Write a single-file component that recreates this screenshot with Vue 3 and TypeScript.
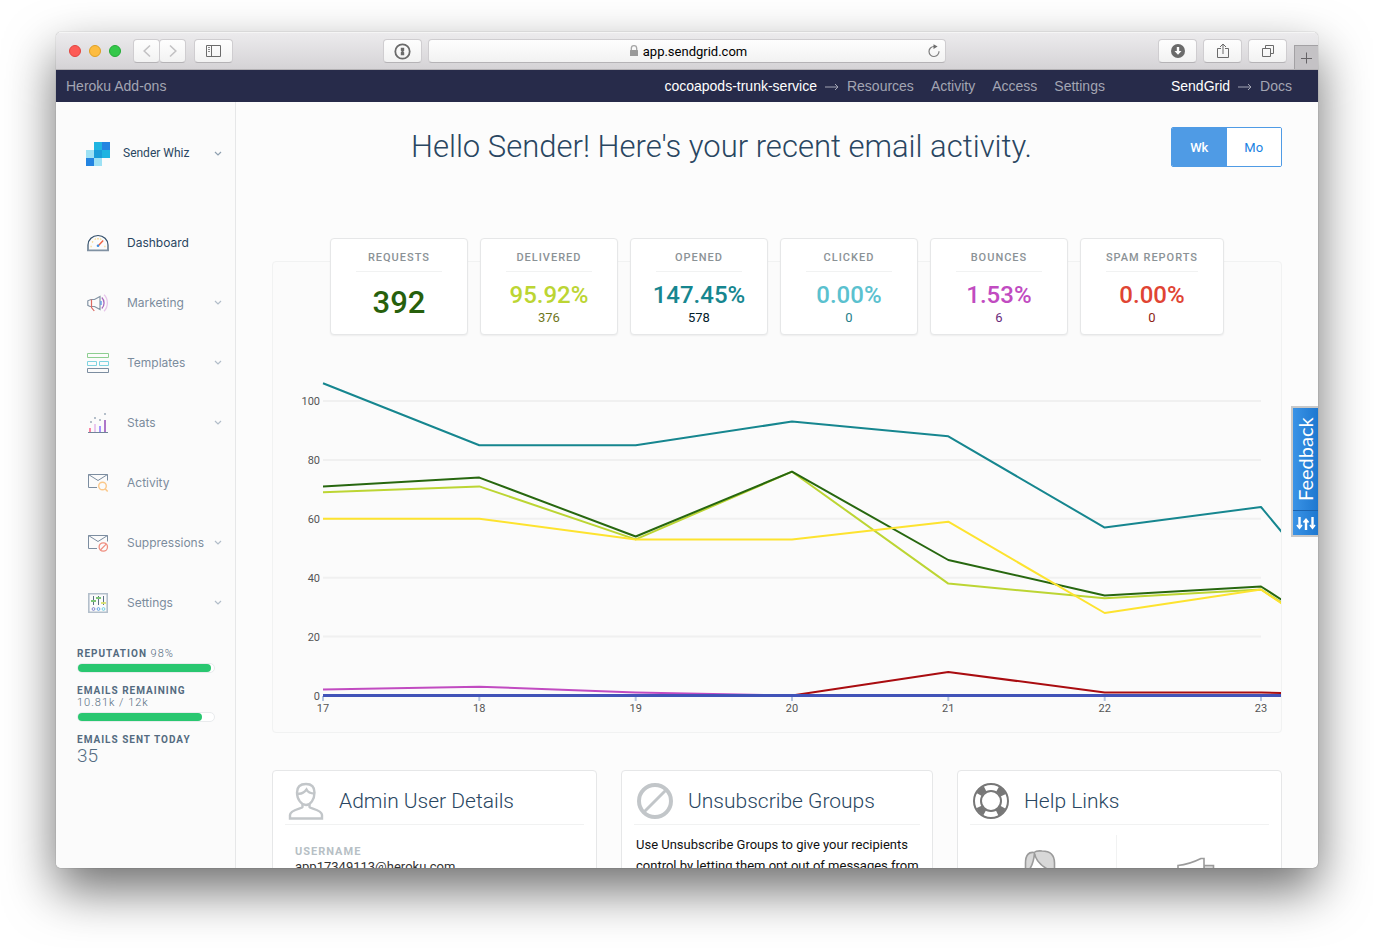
<script setup lang="ts">
import { computed, ref } from 'vue'

interface NavItem { label: string; icon: string; expandable: boolean }
interface Metric { label: string; value: string; count?: string; tone: string }
interface Series { name: string; color: string; width: number; values: number[] }

const range = ref<'Wk' | 'Mo'>('Wk')
const active = ref('Dashboard')
const address = ref('app.sendgrid.com')

const navItems: NavItem[] = [
  { label: 'Dashboard', icon: 'dashboard', expandable: false },
  { label: 'Marketing', icon: 'marketing', expandable: true },
  { label: 'Templates', icon: 'templates', expandable: true },
  { label: 'Stats', icon: 'stats', expandable: true },
  { label: 'Activity', icon: 'activity', expandable: false },
  { label: 'Suppressions', icon: 'suppressions', expandable: true },
  { label: 'Settings', icon: 'settings', expandable: true },
]

const metrics: Metric[] = [
  { label: 'Requests', value: '392', tone: 'requests' },
  { label: 'Delivered', value: '95.92%', count: '376', tone: 'delivered' },
  { label: 'Opened', value: '147.45%', count: '578', tone: 'opened' },
  { label: 'Clicked', value: '0.00%', count: '0', tone: 'clicked' },
  { label: 'Bounces', value: '1.53%', count: '6', tone: 'bounces' },
  { label: 'Spam Reports', value: '0.00%', count: '0', tone: 'spam' },
]

const series: Series[] = [
  { name: 'opened', color: '#16868f', width: 2, values: [106, 85, 85, 93, 88, 57, 64, 0] },
  { name: 'delivered', color: '#bcd533', width: 2, values: [69, 71, 53, 76, 38, 33, 36, 2] },
  { name: 'requests', color: '#27670f', width: 2, values: [71, 74, 54, 76, 46, 34, 37, 3] },
  { name: 'unique', color: '#fde32f', width: 2, values: [60, 60, 53, 53, 59, 28, 36, 0] },
  { name: 'bounces', color: '#c14bc1', width: 2, values: [2, 3, 1, 0, 0, 0, 0, 0] },
  { name: 'blocks', color: '#a90c10', width: 2, values: [0, 0, 0, 0, 8, 1, 1, 0] },
  { name: 'spam', color: '#4153b8', width: 3, values: [0, 0, 0, 0, 0, 0, 0, 0] },
]

const left = 50
const right = 988
const base = 433.5
const unit = 2.945
const step = (right - left) / 6
const yTicks = [0, 20, 40, 60, 80, 100]
const xTicks = ['17', '18', '19', '20', '21', '22', '23']

const xAt = (i: number) => Math.round((left + i * step) * 10) / 10
const yAt = (v: number) => Math.round((base - v * unit) * 10) / 10
const lines = computed(() =>
  series.map((s) => ({ ...s, points: s.values.map((v, i) => `${xAt(i)},${yAt(v)}`).join(' ') })),
)
</script>

<template>
  <div class="desktop">
    <div class="window">
      <header class="toolbar">
        <div class="lights">
          <button class="light close" aria-label="Close"></button>
          <button class="light minimize" aria-label="Minimize"></button>
          <button class="light zoom" aria-label="Zoom"></button>
        </div>
        <div class="history">
          <button class="tool narrow" aria-label="Back">
            <svg width="10" height="14" viewBox="0 0 10 14"><path d="M8 1.5 2.2 7 8 12.5" fill="none" stroke="#c3c2c4" stroke-width="1.6" /></svg>
          </button>
          <button class="tool narrow" aria-label="Forward">
            <svg width="10" height="14" viewBox="0 0 10 14"><path d="M2 1.5 7.8 7 2 12.5" fill="none" stroke="#c3c2c4" stroke-width="1.6" /></svg>
          </button>
        </div>
        <button class="tool" aria-label="Show sidebar">
          <svg width="15" height="12" viewBox="0 0 15 12" fill="none" stroke="#6b6b6b">
            <path d="M.5.5h14v11H.5zM5.5.5v11" /><path d="M2 2.5h2M2 4.5h2M2 6.5h2" stroke="#8b8b8b" />
          </svg>
        </button>
        <button class="tool password" aria-label="Password manager">
          <svg width="17" height="17" viewBox="0 0 17 17">
            <circle cx="8.5" cy="8.5" r="7.2" fill="none" stroke="#6b6b6b" stroke-width="1.8" />
            <path d="M6.800 4.700h3.400v3l-.9.800.9.900v2.900H6.800v-3l.9-.8-.9-.9z" fill="#6b6b6b" />
          </svg>
        </button>
        <div class="address">
          <svg width="10" height="12" viewBox="0 0 10 12"><path d="M2.300 5.500V3.400a2.700 2.700 0 0 1 5.400 0v2.100" fill="none" stroke="#a5a5a5" stroke-width="1.300" /><rect x="1" y="5" width="8" height="6" rx=".6" fill="#999" /></svg>
          <input v-model="address" class="url" type="text" aria-label="Address" />
          <button class="reload" aria-label="Reload">
            <svg width="14" height="14" viewBox="0 0 14 14"><path d="M12 7.300A5 5 0 1 1 7 2.500h1.500" fill="none" stroke="#7d7d7d" stroke-width="1.200" /><path d="M6.500.2 10.600 2.500 6.500 4.900z" fill="#6d6d6d" /></svg>
          </button>
        </div>
        <div class="actions">
          <button class="tool" aria-label="Downloads">
            <svg width="14" height="14" viewBox="0 0 14 14"><circle cx="7" cy="7" r="7" fill="#6b6b6b" /><path d="M5.800 3h2.400v4h2.300L7 10.800 3.500 7h2.300z" fill="#fff" /></svg>
          </button>
          <button class="tool" aria-label="Share">
            <svg width="12" height="16" viewBox="0 0 12 16" fill="none" stroke="#6b6b6b"><path d="M4 5.500H.5v9h11v-9H8M6 11V1.200M3 4l3-3 3 3" /></svg>
          </button>
          <button class="tool" aria-label="Show all tabs">
            <svg width="12" height="12" viewBox="0 0 12 12" fill="none" stroke="#6b6b6b"><path d="M.5 3.500h8v8h-8zM3.500 3V.5h8v8H9" /></svg>
          </button>
        </div>
        <button class="new-tab" aria-label="New tab">
          <svg width="12" height="12" viewBox="0 0 12 12"><path d="M5.500.5v11M0 6.500h11" stroke="#656366" /></svg>
        </button>
      </header>

      <nav class="heroku" aria-label="Heroku">
        <a href="#addons">Heroku Add-ons</a>
        <div class="crumbs">
          <a href="#app" class="strong">cocoapods-trunk-service</a>
          <svg class="arrow" width="14" height="8" viewBox="0 0 14 8"><path d="M0 4h13M10 1l3 3-3 3" fill="none" stroke="#a3a5b3" /></svg>
          <a href="#resources">Resources</a>
          <a href="#activity" class="spaced">Activity</a>
          <a href="#access" class="spaced">Access</a>
          <a href="#settings" class="spaced">Settings</a>
          <a href="#sendgrid" class="strong apart">SendGrid</a>
          <svg class="arrow" width="14" height="8" viewBox="0 0 14 8"><path d="M0 4h13M10 1l3 3-3 3" fill="none" stroke="#a3a5b3" /></svg>
          <a href="#docs">Docs</a>
        </div>
      </nav>

      <div class="body">
        <aside class="sidebar">
          <button class="account">
            <svg width="24" height="24" viewBox="0 0 24 24" shape-rendering="crispEdges">
              <path d="M8 0h8v8H8zM16 8h8v8h-8z" fill="#1fb4e1" /><path d="M16 0h8v8h-8zM0 16h8v8H0z" fill="#2384e1" />
              <path d="M0 8h8v8H0zM8 16h8v8H8z" fill="#9de1f4" /><path d="M8 8h8v8H8z" fill="#1a9dda" />
            </svg>
            <span class="account-name">Sender Whiz</span>
            <svg class="chevron" width="8" height="6" viewBox="0 0 8 6"><path d="m1 1 3 3 3-3" fill="none" stroke="#8fa0b0" stroke-width="1.200" /></svg>
          </button>

          <nav class="menu" aria-label="Main">
            <a v-for="item in navItems" :key="item.label" :href="'#' + item.icon" class="menu-item" :class="{ current: active === item.label }" @click="active = item.label">
              <span class="menu-icon">
                <svg v-if="item.icon === 'dashboard'" width="22" height="18" viewBox="0 0 22 18" fill="none">
                  <path d="M1 16.500V11a10 9.500 0 0 1 20 0v5.500" stroke="#34506b" stroke-width="1.200" /><path d="M0 16.300h22" stroke="#8091a2" stroke-width="1.800" />
                  <path d="M3.500 12.500h1.200M17.300 12.500h1.200M5 7.500l1.100.8M8 4.600l.6 1M11 4v1.500M14 4.600l-.6 1" stroke="#f9d88a" stroke-width="1.500" />
                  <path d="M11.500 11.500 16.200 6.500" stroke="#f0603f" stroke-width="1.400" /><circle cx="11" cy="11.800" r="1.300" fill="#3f8fe0" />
                </svg>
                <svg v-else-if="item.icon === 'marketing'" width="22" height="18" viewBox="0 0 22 18" fill="none">
                  <path d="M4 5.500h3.500L13 2.500v13L7.500 12.500H3L.8 11.300V6.800z" stroke="#8494a5" stroke-width="1.200" /><path d="M4.500 5.500v8L7.300 17" stroke="#dc6a63" stroke-width="1.200" />
                  <path d="M14 7v4" stroke="#5b9be6" stroke-width="1.400" /><path d="M14.800 3.500c3 3 3 8 0 11" stroke="#a869be" stroke-width="1.300" /><path d="M17 .8c4.500 4.300 4.500 12 0 16.400" stroke="#e7c6ea" stroke-width="1.300" />
                </svg>
                <svg v-else-if="item.icon === 'templates'" width="22" height="20" viewBox="0 0 22 20" fill="none">
                  <path d="M.5.5h21v4H.5z" stroke="#8dce90" /><path d="M.5 8.500h9v4h-9zM12.500 8.500h9v4h-9z" stroke="#7fd3e0" /><path d="M.5 15.500h21v4H.5z" stroke="#7c8da0" />
                </svg>
                <svg v-else-if="item.icon === 'stats'" width="20" height="20" viewBox="0 0 20 20" shape-rendering="crispEdges">
                  <path d="M1 15h2v4H1z" fill="#fb84a4" /><path d="M6 11h2v8H6z" fill="#e9c8ef" /><path d="M11 13h2v6h-2z" fill="#a695ff" /><path d="M16 7h2v12h-2z" fill="#ad76c8" />
                  <path d="M2 8h2v2H2zM6 4h2v2H6zM11 6h2v2h-2zM16 0h2v2h-2z" fill="#b4bfca" /><path d="M0 19h20v1H0z" fill="#71849a" />
                </svg>
                <svg v-else-if="item.icon === 'activity'" width="22" height="20" viewBox="0 0 22 20" fill="none">
                  <path d="M10 14.500H1.500V1.500h19v6M1.500 1.500l9.500 6 9.500-6" stroke="#7c8da0" /><circle cx="15.500" cy="13" r="3.800" stroke="#fbc88a" stroke-width="1.400" /><path d="m18.300 16 2.400 2.500" stroke="#fbc88a" stroke-width="1.600" />
                </svg>
                <svg v-else-if="item.icon === 'suppressions'" width="22" height="20" viewBox="0 0 22 20" fill="none">
                  <path d="M10 15.500H1.500V2.500h19v6M1.500 2.500l9.500 6 9.500-6" stroke="#7c8da0" /><circle cx="16.300" cy="14" r="4.200" stroke="#ef8f80" stroke-width="1.300" /><path d="m13.400 17 5.800-5.900" stroke="#ef8f80" stroke-width="1.300" />
                </svg>
                <svg v-else width="20" height="20" viewBox="0 0 20 20" fill="none">
                  <path d="M.8.8h18.400v18.400H.8z" stroke="#b3bfcb" stroke-width="1.600" /><path d="M5.500 3v9M10.500 3v9M15.500 3v9" stroke="#5c7086" />
                  <path d="M3 8h5M8 5h5" stroke="#7cc576" stroke-width="1.800" /><path d="M13 10h5" stroke="#dbe36c" stroke-width="1.800" />
                  <circle cx="5.500" cy="16" r="1.400" stroke="#8287d0" /><circle cx="10.500" cy="16" r="1.400" stroke="#67a5e6" /><circle cx="15.500" cy="16" r="1.400" stroke="#6fd0e4" />
                </svg>
              </span>
              <span class="menu-label">{{ item.label }}</span>
              <svg v-if="item.expandable" class="chevron" width="8" height="6" viewBox="0 0 8 6"><path d="m1 1 3 3 3-3" fill="none" stroke="#b2bdc9" stroke-width="1.200" /></svg>
            </a>
          </nav>

          <div class="usage">
            <div class="usage-line"><b>Reputation</b> 98%</div>
            <div class="bar"><div class="bar-fill" :style="{ width: '98%' }"></div></div>
            <div class="usage-line next"><b>Emails Remaining</b></div>
            <div class="usage-line">10.81k / 12k</div>
            <div class="bar"><div class="bar-fill" :style="{ width: '91%' }"></div></div>
            <div class="usage-line next"><b>Emails Sent Today</b></div>
            <div class="sent-count">35</div>
          </div>
        </aside>

        <main class="content">
          <div class="heading">
            <h1>Hello Sender! Here's your recent email activity.</h1>
            <div class="toggle" role="group" aria-label="Range">
              <button :class="{ on: range === 'Wk' }" @click="range = 'Wk'">Wk</button>
              <button :class="{ on: range === 'Mo' }" @click="range = 'Mo'">Mo</button>
            </div>
          </div>

          <div class="metrics">
            <section v-for="m in metrics" :key="m.label" class="metric" :class="m.tone">
              <h2>{{ m.label }}</h2>
              <div class="metric-value">{{ m.value }}</div>
              <div v-if="m.count" class="metric-count">{{ m.count }}</div>
            </section>
          </div>

          <section class="chart" aria-label="Email activity">
            <svg viewBox="0 0 1008 470">
              <g v-for="t in yTicks" :key="t">
                <path v-if="t > 0" :d="`M${left} ${yAt(t)}H${right}`" stroke="#f0f0f0" stroke-width="2" />
                <text :x="left - 3" :y="yAt(t) + 4" text-anchor="end">{{ t }}</text>
              </g>
              <g v-for="(t, i) in xTicks" :key="t">
                <path :d="`M${xAt(i)} 434v5`" stroke="#b4c4e0" stroke-width="2" />
                <text :x="xAt(i)" y="450" text-anchor="middle">{{ t }}</text>
              </g>
              <polyline v-for="l in lines" :key="l.name" :points="l.points" fill="none" :stroke="l.color" :stroke-width="l.width" stroke-linejoin="round" />
            </svg>
          </section>

          <div class="panels">
            <section class="panel">
              <header>
                <svg width="36" height="38" viewBox="0 0 36 38" fill="none" stroke="#c2c6c9" stroke-width="2.400">
                  <path d="M9 10.500C9 4.500 12.500 2 18 2s8.500 2.500 8.500 8.500c0 7-4 12.500-8.500 12.500S9 17.500 9 10.500z" /><path d="M9 11.500c4 1 6.500 0 9.500-4 1.500 3 4 4 8 4" />
                  <path d="M14.500 22v3c0 1.500-12.500 2.500-12.500 8v3.500h32V33c0-5.500-12.500-6.500-12.500-8v-3" />
                </svg>
                <h3>Admin User Details</h3>
              </header>
              <dl>
                <dt>Username</dt>
                <dd>app17349113@heroku.com</dd>
              </dl>
            </section>
            <section class="panel">
              <header>
                <svg width="36" height="36" viewBox="0 0 36 36" fill="none" stroke="#c2c6c9"><circle cx="18" cy="18" r="16" stroke-width="4" /><path d="M7 29 29 7" stroke-width="3" /></svg>
                <h3>Unsubscribe Groups</h3>
              </header>
              <p>Use Unsubscribe Groups to give your recipients control by letting them opt out of messages from</p>
            </section>
            <section class="panel">
              <header>
                <svg width="36" height="36" viewBox="0 0 36 36" fill="none">
                  <circle cx="18" cy="18" r="13.500" stroke="#777" stroke-width="6" stroke-dasharray="8.200 13.006" stroke-dashoffset="-6.500" />
                  <circle cx="18" cy="18" r="17" stroke="#777" stroke-width="2" /><circle cx="18" cy="18" r="10" stroke="#777" stroke-width="2" />
                </svg>
                <h3>Help Links</h3>
              </header>
              <div class="help">
                <a href="#support" aria-label="Support">
                  <svg width="32" height="36" viewBox="0 0 32 36" stroke="#9b9b9b" stroke-width="1.600"><path d="M1.500 30V13C1.500 5 5 1.500 10 2.500 12 .8 16 .8 18 1c9 0 12.500 4 12.500 12v17z" fill="#d8d8d8" /><path d="M5 30V20c3-4 5-10 5.500-17 1 8 7 13 14.500 17v10z" fill="#fff" /></svg>
                </a>
                <a href="#news" aria-label="Announcements">
                  <svg width="38" height="36" viewBox="0 0 38 36" stroke="#9b9b9b" stroke-width="1.600"><path d="M27 8.500h9.500V20H27z" fill="#d8d8d8" /><path d="M1 8.500C11 7.500 18 4.500 24 1.500h3V27h-3C18 24 11 21 1 20z" fill="#fff" /></svg>
                </a>
              </div>
            </section>
          </div>
        </main>
      </div>

      <button class="feedback">
        <span class="feedback-label">Feedback</span>
        <span class="feedback-icon">
          <svg width="20" height="13" viewBox="0 0 20 13" fill="none" stroke="#fff" stroke-width="2.400"><path d="M3.500 0v10M10 13V4M16.500 0v10" /><path d="m1 8 2.500 3L6 8M7.500 5.500 10 2.500l2.500 3M14 8l2.500 3L19 8" stroke-width="1.800" /></svg>
        </span>
      </button>
    </div>
  </div>
</template>

<style>
body { margin: 0; background: #fff; }
</style>

<style scoped>
* { box-sizing: border-box; }
button { padding: 0; border: 0; background: none; font: inherit; color: inherit; cursor: pointer; }
a { color: inherit; text-decoration: none; }
h1, h2, h3, p, dl, dd { margin: 0; font-weight: inherit; }
svg { display: block; flex: none; }

.desktop { height: 100vh; padding: 32px 56px 80px; font-family: Roboto, "Liberation Sans", sans-serif; overflow: hidden; }
.window { position: relative; display: flex; flex-direction: column; height: 100%; border-radius: 5px; overflow: hidden; background: #fcfcfc; box-shadow: 0 0 1px rgba(0, 0, 0, .5), 0 22px 50px rgba(0, 0, 0, .57); }

.toolbar { flex: none; display: flex; align-items: center; height: 38px; padding-left: 13px; background: linear-gradient(#ecebed, #d5d3d6); border-top: 1px solid #f5f5f5; border-bottom: 1px solid #b3b1b4; }
.lights { display: flex; gap: 8px; }
.light { width: 12px; height: 12px; border-radius: 50%; border: 1px solid; }
.close { background: #fd5b56; border-color: #e2443f; }
.minimize { background: #fdbc40; border-color: #dfa023; }
.zoom { background: #34c84a; border-color: #24ab37; }
.tool { display: flex; align-items: center; justify-content: center; width: 39px; height: 24px; border: 1px solid #cfcdd0; border-bottom-color: #b5b3b6; border-radius: 4px; background: linear-gradient(#fefefe, #f2f2f2); }
.history { display: flex; margin: 0 8px 0 12px; }
.narrow { width: 27px; }
.narrow + .narrow { margin-left: -1px; }
.password { margin-left: 12%; }
.address { display: flex; align-items: center; justify-content: center; flex: 1; height: 24px; margin-left: 6px; padding-left: 22px; border: 1px solid #cfcdd0; border-bottom-color: #b5b3b6; border-radius: 4px; background: linear-gradient(#fefefe, #f2f2f2); }
.address > svg { margin-left: auto; }
.url { width: 106px; margin-left: 4px; padding: 0; border: 0; outline: 0; background: none; font: 13px Roboto, sans-serif; color: #000; }
.reload { margin-left: auto; margin-right: 4px; }
.actions { display: flex; gap: 6px; margin-left: 17%; }
.new-tab { display: flex; align-items: center; justify-content: center; align-self: flex-end; width: 24px; height: 24px; margin-left: 7px; border: 1px solid #a3a1a4; border-width: 1px 0 0 1px; background: #c4c2c5; }

.heroku { flex: none; display: flex; align-items: center; justify-content: space-between; height: 32px; padding: 0 26px 0 10px; background: #272b4a; color: #a3a5b3; font: 14px "Liberation Sans", sans-serif; }
.crumbs { display: flex; align-items: center; }
.strong { color: #fff; }
.arrow { margin: 2px 8px 0; }
.spaced { margin-left: 17px; }
.apart { margin-left: 66px; }

.body { flex: 1; min-height: 0; display: flex; }
.sidebar { flex: none; width: 180px; border-right: 1px solid #e6e7e8; background: #fbfbfb; }
.account { display: flex; align-items: center; width: 100%; height: 60px; margin-top: 22px; padding: 0 13px 0 30px; font-size: 12px; color: #294661; text-align: left; }
.account-name { margin-left: 13px; padding-bottom: 2px; }
.chevron { margin-left: auto; }
.menu { margin-top: 29px; }
.menu-item { display: flex; align-items: center; height: 60px; padding: 0 13px 0 29px; font-family: Inter, sans-serif; font-size: 12px; color: #7b8c9d; }
.menu-item.current { color: #294661; }
.menu-icon { display: flex; justify-content: center; width: 26px; }
.menu-label { margin-left: 16px; padding-bottom: 2px; }
.usage { padding: 15px 20px 0 21px; font-size: 11px; color: #546b81; letter-spacing: 1px; }
.usage-line { line-height: 12px; font-weight: 300; }
.usage-line b { font-size: 10px; font-weight: 700; text-transform: uppercase; }
.bar { height: 10px; margin-top: 3px; border: 1px solid #e9ebed; border-radius: 5px; background: #fff; }
.bar-fill { height: 8px; border-radius: 4px; background: #29c770; }
.next { margin-top: 12px; }
.sent-count { font-size: 19px; line-height: 20px; font-weight: 300; letter-spacing: 0; }

.content { flex: 1; min-width: 0; padding: 25px 36px 0; }
.heading { display: flex; align-items: flex-start; }
h1 { flex: 1; text-align: center; font-size: 31px; line-height: 39px; font-weight: 300; color: #294661; }
.toggle { display: flex; width: 111px; border: 1px solid #4f9be5; border-radius: 2px; overflow: hidden; }
.toggle button { flex: 1; height: 38px; background: #fff; font-size: 13px; color: #1a82e2; }
.toggle button.on { background: #4f9be5; color: #fff; font-weight: 500; }

.metrics { position: relative; display: flex; justify-content: center; gap: 12px; margin-top: 71px; }
.metric { min-width: 138px; height: 97px; padding: 12px 25px 0; border: 1px solid #e6e7e8; border-radius: 4px; background: #fff; box-shadow: 0 1px 2px rgba(0, 0, 0, .06); text-align: center; white-space: nowrap; }
.metric h2 { padding-bottom: 7px; border-bottom: 1px solid #f1f2f2; font-size: 11px; line-height: 13px; font-weight: 500; letter-spacing: 1px; text-transform: uppercase; color: #8b9296; }
.metric-value { margin: 8px -6px 0; font-size: 24px; line-height: 31px; font-weight: 500; }
.metric-count { font-size: 13px; line-height: 14px; }
.requests .metric-value { margin-top: 13px; font-size: 31px; line-height: 36px; color: #27600c; }
.delivered { color: #bcd533; }
.delivered .metric-count { color: #6f761c; }
.opened { color: #16868f; }
.opened .metric-count { color: #02202a; }
.clicked { color: #5bc1cf; }
.clicked .metric-count { color: #24808b; }
.bounces { color: #c14bc1; }
.bounces .metric-count { color: #6a2a7b; }
.spam { color: #e04433; }
.spam .metric-count { color: #8e1f14; }

.chart { margin-top: -74px; border: 1px solid #f1f2f2; border-radius: 4px; background: #fbfbfb; overflow: hidden; }
.chart svg { width: 100%; height: auto; }
.chart text { font-size: 11px; fill: #555; }

.panels { display: grid; grid-template-columns: 25fr 24fr 25fr; gap: 24px; margin-top: 37px; }
.panel { height: 260px; padding: 0 12px; border: 1px solid #e6e7e8; border-radius: 4px; background: #fff; }
.panel header { display: flex; align-items: center; gap: 15px; height: 54px; padding: 6px 3px 0; border-bottom: 1px solid #f1f2f2; }
h3 { font-size: 21px; font-weight: 300; color: #294661; }
dl { padding: 19px 10px 0; }
dt { font-size: 11px; line-height: 15px; font-weight: 700; letter-spacing: 1px; text-transform: uppercase; color: #b7bfc5; }
dd { font-size: 13px; line-height: 16px; color: #333; }
.panel p { padding: 9px 0 0 2px; font-size: 13px; line-height: 21px; color: #111; }
.help { display: grid; grid-template-columns: 38fr 40fr; margin: 10px -6px 0; }
.help a { display: flex; justify-content: center; height: 150px; padding-top: 15px; }
.help a + a { padding-top: 22px; border-left: 1px solid #f1f2f2; }

.feedback { position: absolute; right: 0; top: 374px; width: 27px; border: 2px solid #c8c8c8; border-right: 0; background: linear-gradient(90deg, #3a93e6, #1e78d0); color: #fff; }
.feedback-label { display: block; height: 102px; padding: 7px 0; writing-mode: vertical-rl; transform: rotate(180deg); font-family: Lato, sans-serif; font-size: 20px; line-height: 25px; text-align: center; }
.feedback-icon { display: flex; align-items: center; justify-content: center; height: 25px; border-top: 1px solid #1b63ae; }
</style>
